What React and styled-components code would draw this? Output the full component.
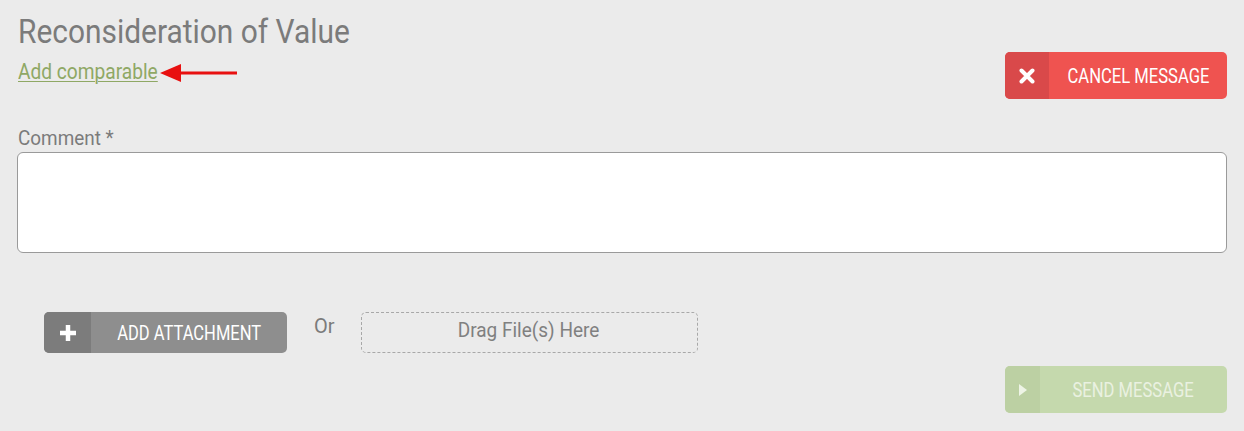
import React from "react";
import styled, { createGlobalStyle } from "styled-components";

const Global = createGlobalStyle`
  html, body { margin: 0; padding: 0; background: #ebebeb; }
  body { font-family: Roboto, "Liberation Sans", sans-serif; }
`;

const Page = styled.div`
  width: 1244px;
  height: 431px;
  box-sizing: border-box;
  padding: 12px 17px 0 17px;
  background: #ebebeb;
  color: #7b7b7b;
`;

/* Roboto squeezed horizontally to imitate the condensed face of the original */
const Narrow = styled.span`
  display: inline-block;
  white-space: nowrap;
  transform: scaleX(${(p) => p.$sx});
  transform-origin: ${(p) => p.$origin || "left"} center;
`;

const Header = styled.div`
  display: flex;
  justify-content: space-between;
  align-items: flex-start;
`;

const TitleBlock = styled.div`
  display: flex;
  flex-direction: column;
  padding-left: 1px;
`;

const Title = styled.h1`
  margin: 0;
  font-weight: 400;
  font-size: 33px;
  line-height: 40px;
  color: #7b7b7b;
`;

const LinkRow = styled.div`
  display: flex;
  align-items: center;
  margin-top: 7px;
`;

const Link = styled.a`
  font-size: 22px;
  line-height: 26px;
  color: #8fa865;
  cursor: pointer;
`;

const LinkText = styled(Narrow)`
  text-decoration: underline;
  text-decoration-thickness: 1px;
  text-underline-offset: 2px;
`;

const ArrowWrap = styled.span`
  display: flex;
  margin-left: -19px;
  margin-top: 1px;
`;

const Button = styled.button`
  display: flex;
  align-items: stretch;
  padding: 0;
  border: none;
  border-radius: 5px;
  overflow: hidden;
  width: ${(p) => p.$width}px;
  height: ${(p) => p.$height}px;
  background: ${(p) => p.$bg};
  color: ${(p) => p.$fg};
  font-family: Roboto, "Liberation Sans", sans-serif;
  font-size: 20px;
  text-transform: uppercase;
  margin-top: ${(p) => p.$top || 0}px;
  cursor: pointer;
`;

const IconCell = styled.span`
  display: flex;
  align-items: center;
  justify-content: center;
  width: ${(p) => p.$w}px;
  background: ${(p) => p.$bg};
  flex: none;
`;

const Label = styled.span`
  flex: 1;
  display: flex;
  align-items: center;
  justify-content: center;
`;

const Field = styled.div`
  margin-top: 26px;
  display: flex;
  flex-direction: column;
`;

const FieldLabel = styled.label`
  font-size: 21px;
  line-height: 27px;
  color: #7b7b7b;
  padding-left: 1px;
`;

const TextArea = styled.textarea`
  box-sizing: border-box;
  width: 1210px;
  height: 101px;
  border: 1px solid #9a9a9a;
  border-radius: 6px;
  background: #fff;
  resize: none;
  outline: none;
`;

const AttachRow = styled.div`
  display: flex;
  align-items: flex-start;
  margin-top: 59px;
  padding-left: 27px;
`;

const Or = styled.span`
  font-size: 20px;
  line-height: 24px;
  margin: 2px 26px 0 27px;
  color: #7b7b7b;
`;

const DropZone = styled.div`
  box-sizing: border-box;
  width: 337px;
  height: 41px;
  border: 1px dashed #a8a8a8;
  border-radius: 5px;
  display: flex;
  justify-content: center;
  padding-top: 5px;
  font-size: 20px;
  color: #808080;
`;

const SendRow = styled.div`
  display: flex;
  justify-content: flex-end;
  margin-top: 13px;
`;

const Arrow = () => (
  <svg width="80" height="20" viewBox="0 0 80 20">
    <polygon points="0,10 21,1 21,19" fill="#e81010" />
    <rect x="20" y="8.5" width="57" height="3" fill="#e81010" />
  </svg>
);

const XIcon = () => (
  <svg width="16" height="16" viewBox="0 0 16 16">
    <path d="M2.5 2.5 L13.5 13.5 M13.5 2.5 L2.5 13.5" stroke="#fff" strokeWidth="4" strokeLinecap="round" />
  </svg>
);

const PlusIcon = () => (
  <svg width="18" height="18" viewBox="0 0 18 18">
    <path d="M9 1 V17 M1 9 H17" stroke="#fff" strokeWidth="4.5" />
  </svg>
);

const PlayIcon = () => (
  <svg width="10" height="14" viewBox="0 0 10 14">
    <polygon points="1,1 9,7 1,13" fill="#eef4e6" />
  </svg>
);

export default function App() {
  return (
    <>
      <Global />
      <Page>
        <Header>
          <TitleBlock>
            <Title>
              <Narrow $sx={0.906}>Reconsideration of Value</Narrow>
            </Title>
            <LinkRow>
              <Link>
                <LinkText $sx={0.87}>Add comparable</LinkText>
              </Link>
              <ArrowWrap>
                <Arrow />
              </ArrowWrap>
            </LinkRow>
          </TitleBlock>
          <Button $width={222} $height={47} $bg="#ef5350" $fg="#fff" $top={40}>
            <IconCell $w={44} $bg="#d9494a">
              <XIcon />
            </IconCell>
            <Label>
              <Narrow $sx={0.83} $origin="center">Cancel Message</Narrow>
            </Label>
          </Button>
        </Header>
        <Field>
          <FieldLabel>
            <Narrow $sx={0.9}>Comment *</Narrow>
          </FieldLabel>
          <TextArea />
        </Field>
        <AttachRow>
          <Button $width={243} $height={41} $bg="#8e8e8e" $fg="#fff">
            <IconCell $w={47} $bg="#7c7c7c">
              <PlusIcon />
            </IconCell>
            <Label>
              <Narrow $sx={0.826} $origin="center">Add Attachment</Narrow>
            </Label>
          </Button>
          <Or>Or</Or>
          <DropZone>
            <Narrow $sx={0.95} $origin="center">Drag File(s) Here</Narrow>
          </DropZone>
        </AttachRow>
        <SendRow>
          <Button $width={222} $height={47} $bg="#c5d9ad" $fg="#eaf1e1">
            <IconCell $w={35} $bg="#bcd0a3">
              <PlayIcon />
            </IconCell>
            <Label>
              <Narrow $sx={0.83} $origin="center">Send Message</Narrow>
            </Label>
          </Button>
        </SendRow>
      </Page>
    </>
  );
}
